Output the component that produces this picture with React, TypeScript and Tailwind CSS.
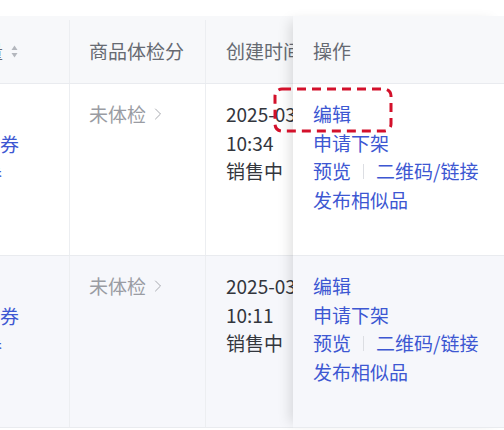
import { ChevronRight } from "lucide-react";

type Row = {
  date: string;
  time: string;
  bg: string;
};

const rows: Row[] = [
  { date: "2025-03-18", time: "10:34", bg: "bg-white" },
  { date: "2025-03-12", time: "10:11", bg: "bg-[#f6f7fb]" },
];

function SortIcon() {
  return (
    <svg width="7" height="13" viewBox="0 0 7 13" className="shrink-0">
      <path d="M3.5 0.5 L6.5 5 H0.5 Z" fill="#b4b7bd" />
      <path d="M3.5 12.5 L6.5 8 H0.5 Z" fill="#b4b7bd" />
    </svg>
  );
}

function Actions() {
  return (
    <div className="flex flex-col text-[#3d57d2]">
      <span>编辑</span>
      <span>申请下架</span>
      <div className="flex items-center">
        <span>预览</span>
        <span className="mx-[12px] h-[15px] w-px bg-[#dcdee3]" />
        <span>二维码/链接</span>
      </div>
      <span>发布相似品</span>
    </div>
  );
}

export default function App() {
  return (
    <div
      className="relative h-[430px] w-[504px] overflow-hidden bg-white text-[19px] leading-[28.5px]"
      style={{ fontFamily: '"Noto Sans CJK SC", "Noto Sans", sans-serif' }}
    >
      <div className="h-[16px] bg-white" />
      <div className="flex">
        {/* scrolled part */}
        <div className="flex flex-1 flex-col overflow-hidden">
          <div className="flex h-[68px] border-b border-[#e9ebef] bg-[#f7f8fa] pt-[4px] text-[#666a72]">
            <div className="flex w-[70px] shrink-0 items-center justify-end gap-[8px] border-r border-[#eceef1] pr-[51px]">
              <span className="whitespace-nowrap">销量</span>
              <SortIcon />
            </div>
            <div className="flex w-[136px] shrink-0 items-center border-r border-[#eceef1] pl-[19px]">
              商品体检分
            </div>
            <div className="flex flex-1 items-center whitespace-nowrap pl-[20px]">创建时间</div>
          </div>
          {rows.map((r, i) => (
            <div key={i} className={`flex h-[172px] border-b border-[#e9ebef] ${r.bg}`}>
              <div className="flex w-[70px] shrink-0 flex-col items-end overflow-hidden border-r border-[#eceef1] pt-[46px] text-[#3d57d2]">
                <span className="whitespace-nowrap pr-[50px]">优惠券</span>
                <span className="whitespace-nowrap pr-[67px]">券</span>
              </div>
              <div className="w-[136px] shrink-0 border-r border-[#eceef1] pl-[19px] pt-[16px]">
                <span className="flex items-center text-[#9a9ca3]">
                  未体检
                  <ChevronRight size={20} strokeWidth={1.2} className="ml-[2px] text-[#a8aab0]" />
                </span>
              </div>
              <div className="flex flex-1 flex-col whitespace-nowrap pl-[20px] pt-[16px] text-[#33363d]">
                <span>{r.date}</span>
                <span>{r.time}</span>
                <span>销售中</span>
              </div>
            </div>
          ))}
        </div>

        {/* fixed action column */}
        <div className="relative z-10 flex w-[211px] shrink-0 flex-col shadow-[-8px_0_12px_-5px_rgba(0,0,0,0.13)]">
          <div className="flex h-[68px] items-center border-b border-[#e9ebef] bg-[#f7f8fa] pl-[20px] pt-[4px] text-[#666a72]">
            操作
          </div>
          {rows.map((r, i) => (
            <div key={i} className={`h-[172px] border-b border-[#e9ebef] pl-[20px] pt-[16px] ${r.bg}`}>
              <Actions />
            </div>
          ))}
        </div>
      </div>

      {/* annotation */}
      <svg className="absolute left-[273px] top-[87px] z-20" width="120" height="46" viewBox="0 0 120 46">
        <rect
          x="2"
          y="2"
          width="116"
          height="42"
          rx="7"
          fill="none"
          stroke="#d3112b"
          strokeWidth="3"
          strokeDasharray="9 6"
        />
      </svg>
    </div>
  );
}
